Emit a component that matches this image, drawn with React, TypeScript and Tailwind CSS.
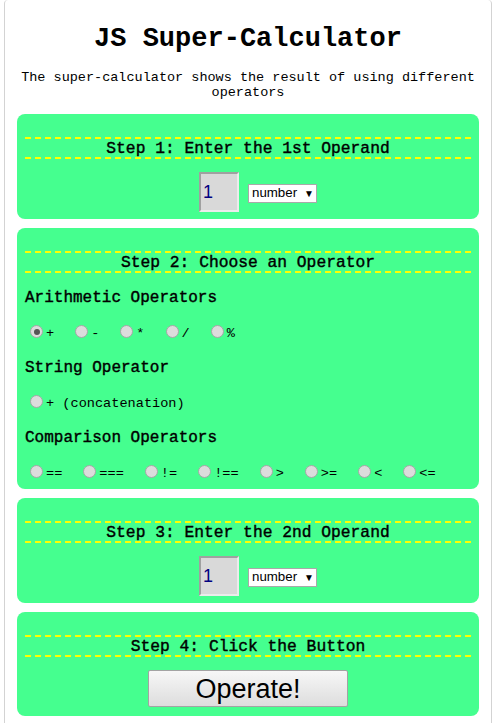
import React from "react";

const mono = { fontFamily: '"Liberation Mono", "Courier New", monospace' };
const sans = { fontFamily: '"Liberation Sans", Arial, sans-serif' };

function Radio({ label, checked = false }: { label: string; checked?: boolean }) {
  return (
    <span className="inline-flex items-center mr-[16px]">
      <span className="ml-[5px] mr-[3px] flex h-[13px] w-[13px] items-center justify-center rounded-full border border-[#a6a6a6] bg-[#dcdcdc]">
        {checked && <span className="h-[6px] w-[6px] rounded-full bg-[#555]" />}
      </span>
      <span className="text-[13.6px] leading-[15px] pt-[3px] text-black" style={mono}>
        {label}
      </span>
    </span>
  );
}

function StepTitle({ children }: { children: React.ReactNode }) {
  return (
    <h2
      className="border-y-2 border-dashed border-[#ffff00] pt-[2px] text-center text-[16.3px] font-normal leading-[16px] text-black [-webkit-text-stroke:0.4px_#000]"
      style={mono}
    >
      {children}
    </h2>
  );
}

function OperandRow() {
  return (
    <div className="mt-[13px] flex items-center justify-center pl-[20px]">
      <input
        readOnly
        value="1"
        className="h-[40px] w-[40px] border-2 border-t-[#a0a0a0] border-l-[#a0a0a0] border-b-[#ececec] border-r-[#ececec] bg-[#d9d9d9] px-[2px] text-[18px] text-[#000080] outline-none"
        style={sans}
      />
      <span
        className="ml-[9px] mt-[2px] flex h-[19px] w-[69px] items-center border border-[#a9a9a9] bg-white pl-[3px] text-[13.3px] text-black"
        style={sans}
      >
        number
        <span className="ml-[7px] text-[10px]">▼</span>
      </span>
    </div>
  );
}

function Card({ children, bottom = 7 }: { children: React.ReactNode; bottom?: number }) {
  return (
    <div className="rounded-[8px] bg-[#45ff8f] px-[8px] pt-[23px]" style={{ paddingBottom: bottom }}>
      {children}
    </div>
  );
}

function Label({ children }: { children: React.ReactNode }) {
  return (
    <div
      className="flex h-[35px] items-center pt-[2px] text-[16px] font-normal text-black [-webkit-text-stroke:0.4px_#000]"
      style={mono}
    >
      {children}
    </div>
  );
}

export default function App() {
  return (
    <div className="min-h-screen bg-white">
      <div className="ml-[4px] min-h-screen w-[488px] rounded-t-[4px] border-x border-[#d3d3d3] px-[12px] pb-[20px]">
        <h1 className="pt-[23px] text-center text-[27px] font-bold leading-[32px] text-black" style={mono}>
          JS Super-Calculator
        </h1>
        <p className="mt-[15px] text-center text-[13.5px] leading-[15px] text-black" style={mono}>
          The super-calculator shows the result of using different operators
        </p>

        <div className="mt-[14px] flex flex-col gap-[9px]">
          <Card>
            <StepTitle>Step 1: Enter the 1st Operand</StepTitle>
            <OperandRow />
          </Card>

          <Card bottom={0}>
            <StepTitle>Step 2: Choose an Operator</StepTitle>
            <div className="mt-[6px]">
              <Label>Arithmetic Operators</Label>
              <div className="flex h-[35px] items-center">
                <Radio label="+" checked />
                <Radio label="-" />
                <Radio label="*" />
                <Radio label="/" />
                <Radio label="%" />
              </div>
              <Label>String Operator</Label>
              <div className="flex h-[35px] items-center">
                <Radio label="+ (concatenation)" />
              </div>
              <Label>Comparison Operators</Label>
              <div className="flex h-[35px] items-center">
                <Radio label="==" />
                <Radio label="===" />
                <Radio label="!=" />
                <Radio label="!==" />
                <Radio label=">" />
                <Radio label=">=" />
                <Radio label="<" />
                <Radio label="<=" />
              </div>
            </div>
          </Card>

          <Card>
            <StepTitle>Step 3: Enter the 2nd Operand</StepTitle>
            <OperandRow />
          </Card>

          <Card bottom={9}>
            <StepTitle>Step 4: Click the Button</StepTitle>
            <div className="mt-[13px] flex justify-center">
              <button
                className="h-[37px] w-[200px] rounded-[2px] border border-[#a3a3a3] bg-gradient-to-b from-[#f7f7f7] to-[#dddddd] pt-[2px] text-[27px] leading-none text-black"
                style={sans}
              >
                Operate!
              </button>
            </div>
          </Card>
        </div>
      </div>
    </div>
  );
}
